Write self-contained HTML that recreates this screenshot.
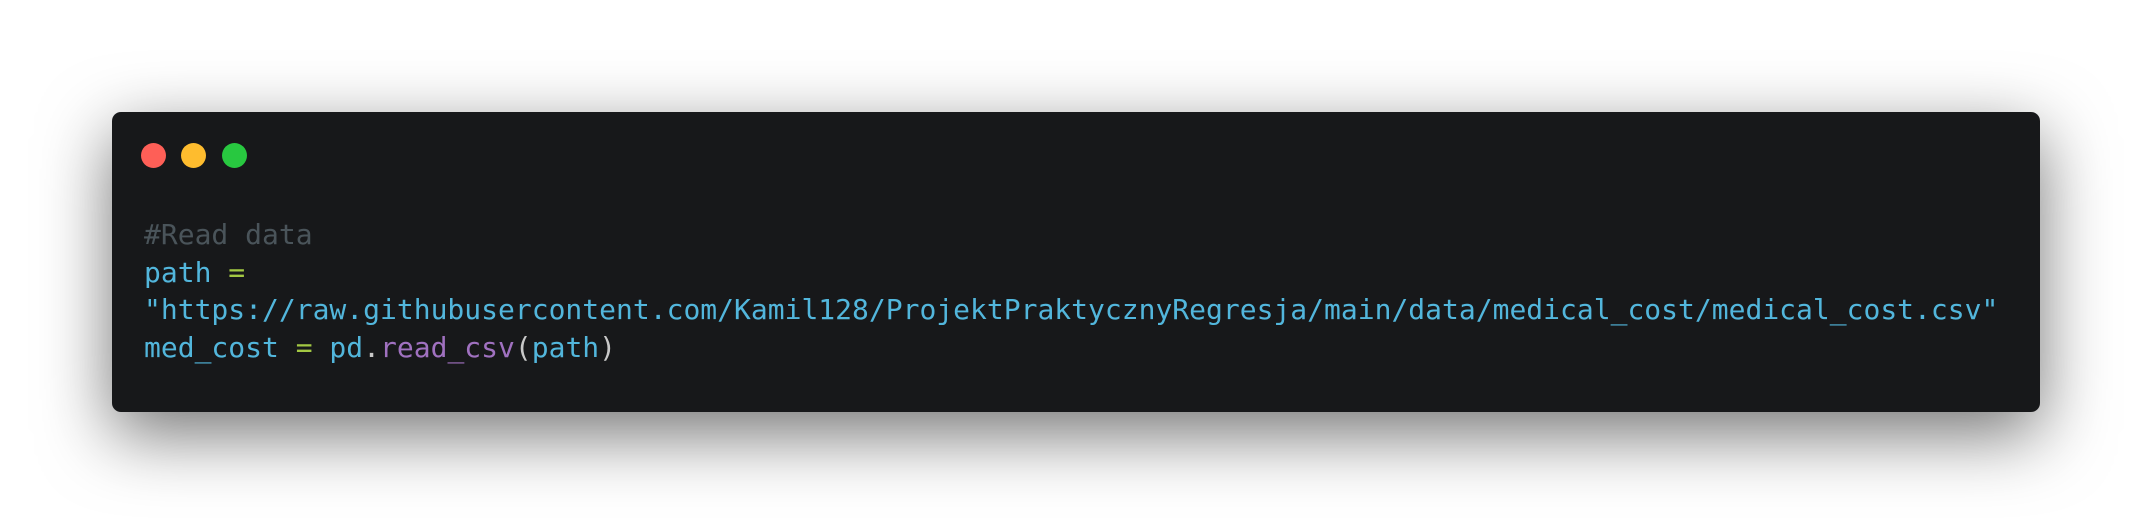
<!DOCTYPE html>
<html><head><style>
html,body{margin:0;padding:0;background:#fff;width:2152px;height:524px;overflow:hidden}
.card{position:absolute;left:112px;top:112px;width:1928px;height:300px;background:#17181a;border-radius:9px;box-shadow:0 22px 70px rgba(0,0,0,0.55)}
.dot{position:absolute;top:143px;width:25px;height:25px;border-radius:50%}
pre{position:absolute;left:144px;top:216px;margin:0;font-family:"DejaVu Sans Mono","Liberation Mono",monospace;font-size:28px;letter-spacing:0px;line-height:37.5px;color:#52b6dc}
.c{color:#4a545a}.g{color:#a3c843}.p{color:#a071c0}.w{color:#c8c8c8}
</style></head><body>
<div class="card"></div>
<div class="dot" style="left:141px;background:#fe5f57"></div>
<div class="dot" style="left:181px;background:#febc2e"></div>
<div class="dot" style="left:222px;background:#28c840"></div>
<pre><span class="c">#Read data</span>
path <span class="g">=</span>
"https://raw.githubusercontent.com/Kamil128/ProjektPraktycznyRegresja/main/data/medical_cost/medical_cost.csv"
med_cost <span class="g">=</span> pd<span class="w">.</span><span class="p">read_csv</span><span class="w">(</span>path<span class="w">)</span></pre>
</body></html>
